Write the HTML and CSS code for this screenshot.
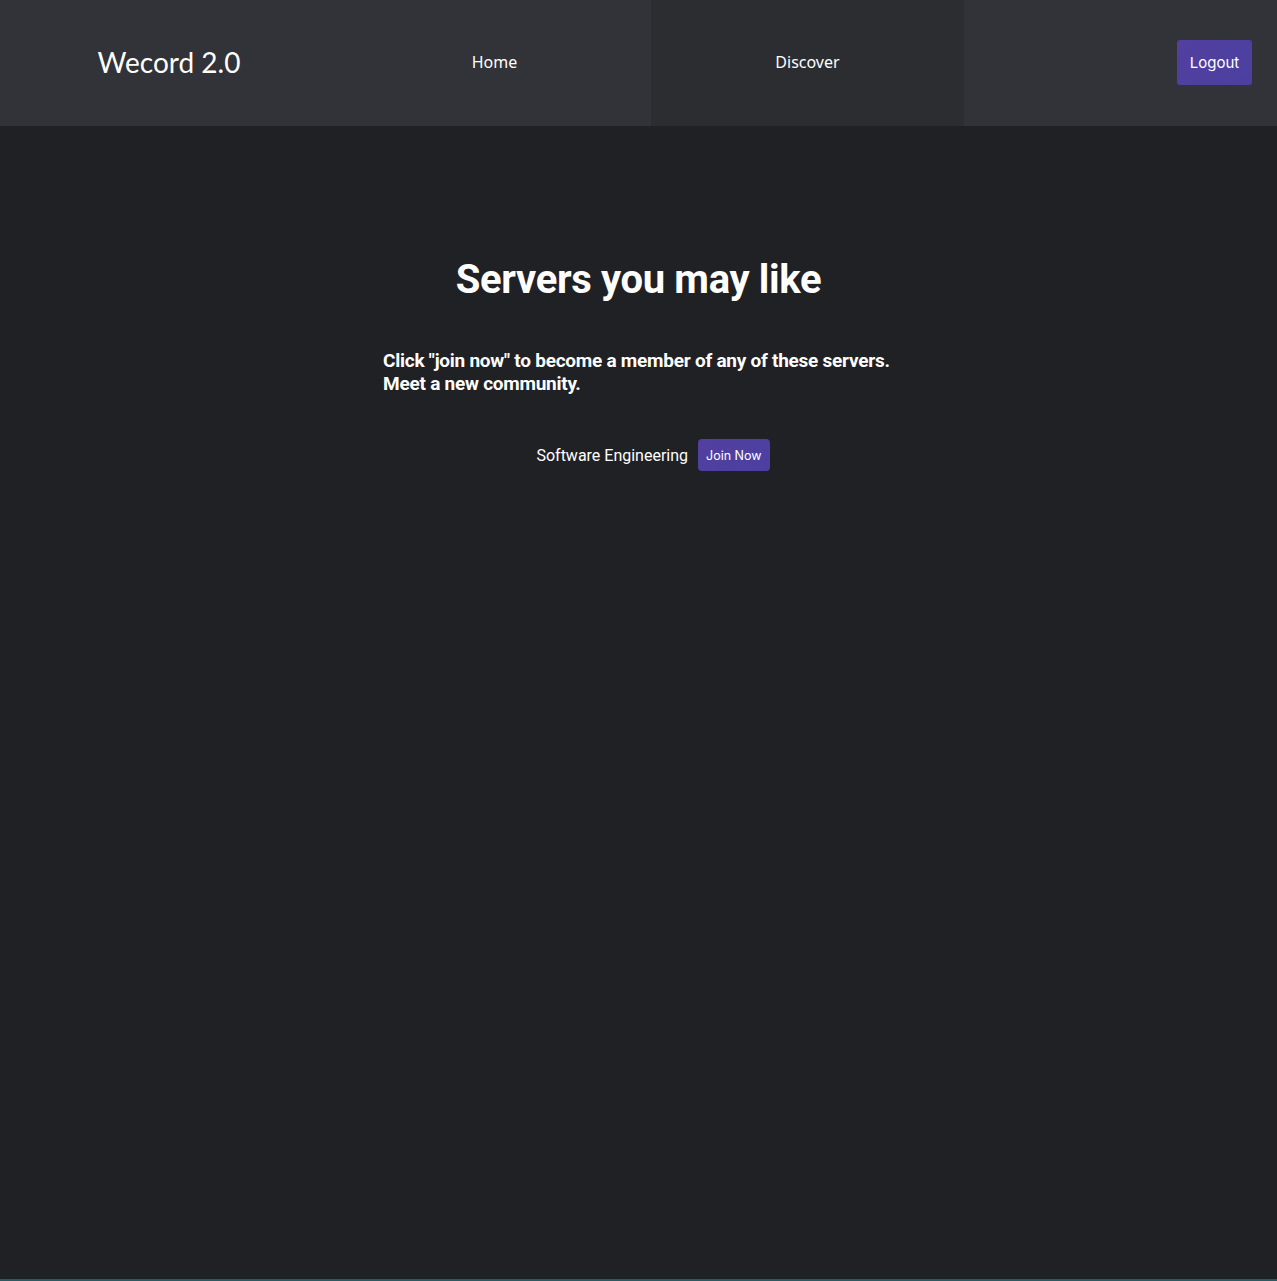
FILE: index.html
```html
<!DOCTYPE html>
<html lang="en">
<head>
<meta charset="utf-8">
<title>Wecord 2.0</title>
<link rel="stylesheet" href="styles.css">
</head>
<body>
<header class="nav">
  <div class="nav-brand">Wecord 2.0</div>
  <a class="nav-link" href="#">Home</a>
  <a class="nav-link active" href="#">Discover</a>
  <div class="nav-end"><button class="btn btn-logout">Logout</button></div>
</header>
<main class="main">
  <h1 class="title">Servers you may like</h1>
  <p class="lead">Click "join now" to become a member of any of these servers. Meet a new community.</p>
  <ul class="servers">
    <li class="server"><span class="server-name">Software Engineering</span><button class="btn btn-join">Join Now</button></li>
  </ul>
</main>
</body>
</html>
```
FILE: styles.css
```css
html, body { margin: 0; padding: 0; }
body {
  background: #202125;
  min-height: 1279px;
  border-bottom: 2px solid #2b5a63;
  color: #fff;
  font-family: Roboto, "Liberation Sans", sans-serif;
}
.nav {
  display: grid;
  grid-template-columns: 338px 313px 313px 313px;
  height: 126px;
  background: #313338;
}
.nav-brand {
  display: flex;
  align-items: center;
  justify-content: center;
  font-family: Lato, "Open Sans", sans-serif;
  font-size: 28px;
  color: #fff;
  padding-bottom: 2px;
}
.nav-link {
  display: flex;
  align-items: center;
  justify-content: center;
  color: #fff;
  text-decoration: none;
  font-family: "Noto Sans", sans-serif;
  font-size: 16px;
  padding-bottom: 2px;
}
.nav-link.active { background: #2b2d31; }
.nav-end {
  display: flex;
  align-items: center;
  justify-content: flex-end;
  padding-right: 25px;
}
.btn {
  border: 0;
  color: #fff;
  background: linear-gradient(135deg, #533f9f, #4a40a0);
  font-family: Inter, sans-serif;
  cursor: pointer;
}
.btn-logout {
  width: 75px;
  height: 45px;
  border-radius: 3px;
  font-size: 15px;
  margin-bottom: 2px;
}
.main {
  padding-top: 130px;
}
.title {
  margin: 0;
  text-align: center;
  font-size: 40px;
  font-weight: 700;
  line-height: 47px;
  letter-spacing: -0.35px;
}
.lead {
  width: 40%;
  margin: 46px auto 0;
  font-size: 19px;
  font-weight: 700;
  line-height: 23px;
  letter-spacing: -0.25px;
}
.servers {
  list-style: none;
  margin: 44px 0 0;
  padding: 0 0 0 29px;
  display: flex;
  flex-direction: column;
  align-items: center;
}
.server {
  display: flex;
  align-items: center;
  gap: 10px;
}
.server-name { font-size: 16px; }
.btn-join {
  height: 32px;
  padding: 0 8px;
  border-radius: 4px;
  font-size: 12.5px;
}
```
